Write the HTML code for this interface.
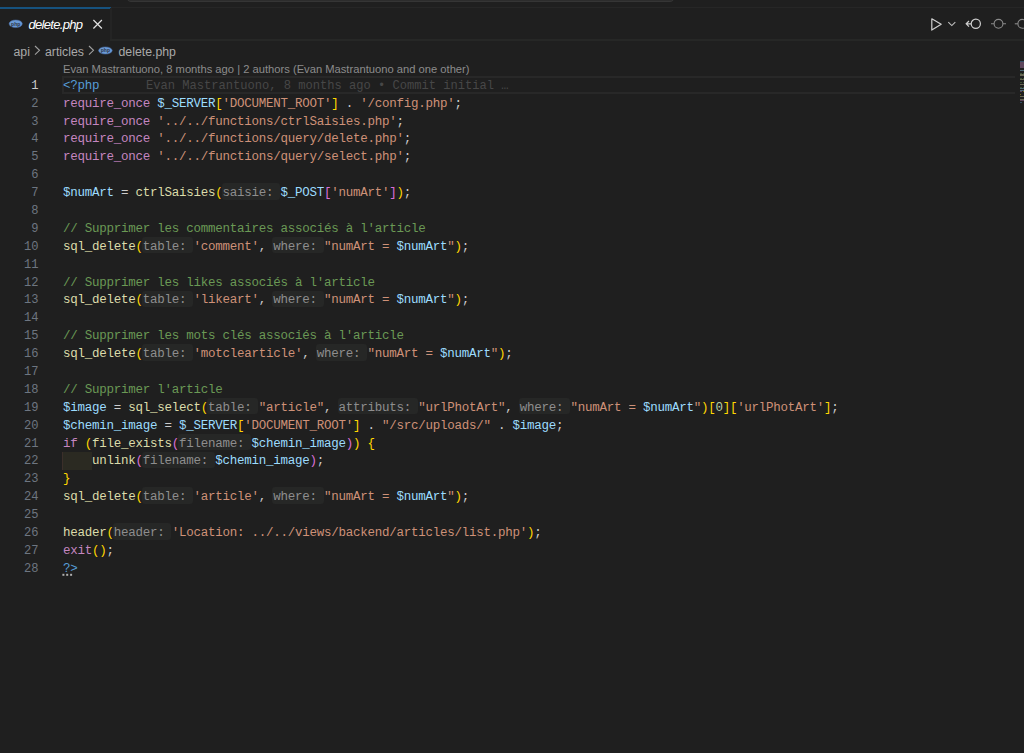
<!DOCTYPE html>
<html><head><meta charset="utf-8">
<style>
html,body{margin:0;padding:0;}
body{width:1024px;height:753px;overflow:hidden;background:#1f1f1f;position:relative;font-family:"Liberation Sans",sans-serif;}
.abs{position:absolute;}
.cmd{position:absolute;left:125.5px;top:-20px;width:549px;height:22.2px;background:#2c2c2c;border:1px solid #353535;border-radius:5px;box-sizing:border-box;}
.tabtop{position:absolute;left:111px;top:7px;width:913px;height:1px;background:#262626;}
.tabbot{position:absolute;left:110px;top:39px;width:914px;height:2px;background:#262726;}
.tab{position:absolute;left:0;top:7px;width:111px;height:33px;background:#1f1f1f;border-top:2px solid #16527f;box-sizing:border-box;}
.tabr{position:absolute;left:110px;top:8px;width:2px;height:32px;background:#242424;}
.tabtxt{position:absolute;left:28.5px;top:16.5px;font-style:italic;font-size:13px;letter-spacing:-0.68px;color:#ffffff;white-space:pre;line-height:16px;}
.bc{position:absolute;top:44px;font-size:12.3px;color:#a9a9a9;white-space:pre;line-height:16px;}
.lens{position:absolute;left:63px;top:62px;font-size:11.2px;color:#8c8c8c;white-space:pre;line-height:15px;}
.ln,.gn{position:absolute;height:17.89px;line-height:17.89px;padding-top:1px;font-family:"Liberation Mono",monospace;font-size:12.08px;white-space:pre;}
.ln{left:63px;font-size:12.5px;letter-spacing:-0.2535px;}
.gn{left:0;width:38.5px;text-align:right;color:#6e7681;}
.gn.cur{color:#cccccc;}
.curline{position:absolute;left:62px;top:76.4px;width:952.6px;height:18.1px;box-sizing:border-box;border:2px solid #282828;border-right:none;}
.hb{position:absolute;height:16.4px;background:#262726;border-radius:3px;}
.k{color:#c586c0}.v{color:#9cdcfe}.s{color:#ce9178}.f{color:#dcdcaa}.y{color:#ffd700}.p{color:#da70d6}
.c{color:#6a9955}.b{color:#569cd6}.h{color:#8e8e8e}.n{color:#b5cea8}.o{color:#cccccc}
.blame{position:absolute;left:146px;top:77.8px;height:17.89px;line-height:17.89px;font-family:"Liberation Mono",monospace;font-size:12.08px;white-space:pre;color:#474747;}
.indent{position:absolute;left:62.3px;top:452px;width:29.6px;height:18px;background:#2b2a22;border-left:1px solid #3b2f2a;box-sizing:border-box;}
</style></head><body>
<div class="cmd"></div>
<div class="tabtop"></div>
<div class="tab"></div>
<div class="tabr"></div>
<div class="tabbot"></div>
<svg class="abs" style="left:8px;top:19px" width="16" height="10" viewBox="0 0 16 10"><ellipse cx="7.7" cy="4.8" rx="6.6" ry="3.8" fill="#6a9ad6" stroke="#4a6ea8" stroke-width="0.5"/><text x="7.7" y="6.5" font-size="5" font-family="Liberation Sans" font-weight="bold" fill="#2a3344" text-anchor="middle">php</text></svg>
<div class="tabtxt">delete.php</div>
<svg class="abs" style="left:92px;top:19px" width="11" height="11" viewBox="0 0 11 11"><path d="M1.4 1L9.9 9.5M9.9 1L1.4 9.5" stroke="#e0e0e0" stroke-width="1.2"/></svg>

<svg class="abs" style="left:924px;top:12px" width="100" height="24" viewBox="0 0 100 24">
<path d="M7.8 6.8L17.2 12.3L7.8 18.1Z" fill="none" stroke="#d0d0d0" stroke-width="1.2" stroke-linejoin="round"/>
<path d="M24.3 10.2L27.8 13.6L31.3 10.2" fill="none" stroke="#c0c0c0" stroke-width="1.1"/>
<circle cx="51.8" cy="11.8" r="4.6" fill="none" stroke="#d0d0d0" stroke-width="1.2"/>
<path d="M47 11.8H42.5M45 9L42.2 11.8L45 14.6" fill="none" stroke="#d0d0d0" stroke-width="1.2"/>
<circle cx="74.5" cy="11.8" r="4.4" fill="none" stroke="#8a8a8a" stroke-width="1.1"/>
<path d="M67 11.8H70.1M78.9 11.8H82" fill="none" stroke="#8a8a8a" stroke-width="1.1"/>
<circle cx="98.3" cy="11.8" r="4.4" fill="none" stroke="#8a8a8a" stroke-width="1.1"/>
<path d="M90.8 11.8H93.9" fill="none" stroke="#8a8a8a" stroke-width="1.1"/>
</svg>

<div class="bc" style="left:13.5px">api</div>
<svg class="abs" style="left:33px;top:45px" width="9" height="11" viewBox="0 0 9 11"><path d="M2 1L6.5 5.3L2 9.6" fill="none" stroke="#a0a0a0" stroke-width="1.1"/></svg>
<div class="bc" style="left:45px">articles</div>
<svg class="abs" style="left:87px;top:45px" width="9" height="11" viewBox="0 0 9 11"><path d="M2 1L6.5 5.3L2 9.6" fill="none" stroke="#a0a0a0" stroke-width="1.1"/></svg>
<svg class="abs" style="left:97px;top:45px" width="16" height="10" viewBox="0 0 16 10"><ellipse cx="8.4" cy="5.5" rx="6.8" ry="3.6" fill="#6a9ad6" stroke="#4a6ea8" stroke-width="0.5"/><text x="8.4" y="7" font-size="5" font-family="Liberation Sans" font-weight="bold" fill="#2a3344" text-anchor="middle">php</text></svg>
<div class="bc" style="left:118.5px">delete.php</div>

<div class="lens">Evan Mastrantuono, 8 months ago | 2 authors (Evan Mastrantuono and one other)</div>

<div class="curline"></div>
<div class="indent"></div>
<div class="hb" style="top:183.34px;left:221.66px;width:58.48px"></div>
<div class="hb" style="top:237.01px;left:141.93px;width:51.24px"></div>
<div class="hb" style="top:237.01px;left:272.39px;width:51.24px"></div>
<div class="hb" style="top:290.68px;left:141.93px;width:51.24px"></div>
<div class="hb" style="top:290.68px;left:272.39px;width:51.24px"></div>
<div class="hb" style="top:344.35px;left:141.93px;width:51.24px"></div>
<div class="hb" style="top:344.35px;left:315.88px;width:51.24px"></div>
<div class="hb" style="top:398.02px;left:207.16px;width:51.24px"></div>
<div class="hb" style="top:398.02px;left:337.62px;width:80.23px"></div>
<div class="hb" style="top:398.02px;left:518.82px;width:51.24px"></div>
<div class="hb" style="top:433.80px;left:178.17px;width:72.98px"></div>
<div class="hb" style="top:451.69px;left:141.93px;width:72.98px"></div>
<div class="hb" style="top:487.47px;left:141.93px;width:51.24px"></div>
<div class="hb" style="top:487.47px;left:272.39px;width:51.24px"></div>
<div class="hb" style="top:523.25px;left:112.94px;width:58.48px"></div>
<div class="gn cur" style="top:76.80px">1</div>
<div class="gn" style="top:94.69px">2</div>
<div class="gn" style="top:112.58px">3</div>
<div class="gn" style="top:130.47px">4</div>
<div class="gn" style="top:148.36px">5</div>
<div class="gn" style="top:166.25px">6</div>
<div class="gn" style="top:184.14px">7</div>
<div class="gn" style="top:202.03px">8</div>
<div class="gn" style="top:219.92px">9</div>
<div class="gn" style="top:237.81px">10</div>
<div class="gn" style="top:255.70px">11</div>
<div class="gn" style="top:273.59px">12</div>
<div class="gn" style="top:291.48px">13</div>
<div class="gn" style="top:309.37px">14</div>
<div class="gn" style="top:327.26px">15</div>
<div class="gn" style="top:345.15px">16</div>
<div class="gn" style="top:363.04px">17</div>
<div class="gn" style="top:380.93px">18</div>
<div class="gn" style="top:398.82px">19</div>
<div class="gn" style="top:416.71px">20</div>
<div class="gn" style="top:434.60px">21</div>
<div class="gn" style="top:452.49px">22</div>
<div class="gn" style="top:470.38px">23</div>
<div class="gn" style="top:488.27px">24</div>
<div class="gn" style="top:506.16px">25</div>
<div class="gn" style="top:524.05px">26</div>
<div class="gn" style="top:541.94px">27</div>
<div class="gn" style="top:559.83px">28</div>
<div class="ln" style="top:76.80px"><span class="b">&lt;?php</span></div>
<div class="ln" style="top:94.69px"><span class="k">require_once</span><span class="o"> </span><span class="v">$_SERVER</span><span class="y">[</span><span class="s">'DOCUMENT_ROOT'</span><span class="y">]</span><span class="o"> . </span><span class="s">'/config.php'</span><span class="o">;</span></div>
<div class="ln" style="top:112.58px"><span class="k">require_once</span><span class="o"> </span><span class="s">'../../functions/ctrlSaisies.php'</span><span class="o">;</span></div>
<div class="ln" style="top:130.47px"><span class="k">require_once</span><span class="o"> </span><span class="s">'../../functions/query/delete.php'</span><span class="o">;</span></div>
<div class="ln" style="top:148.36px"><span class="k">require_once</span><span class="o"> </span><span class="s">'../../functions/query/select.php'</span><span class="o">;</span></div>
<div class="ln" style="top:166.25px"></div>
<div class="ln" style="top:184.14px"><span class="v">$numArt</span><span class="o"> = </span><span class="f">ctrlSaisies</span><span class="y">(</span><span class="h">saisie: </span><span class="v">$_POST</span><span class="p">[</span><span class="s">'numArt'</span><span class="p">]</span><span class="y">)</span><span class="o">;</span></div>
<div class="ln" style="top:202.03px"></div>
<div class="ln" style="top:219.92px"><span class="c">// Supprimer les commentaires associés à l'article</span></div>
<div class="ln" style="top:237.81px"><span class="f">sql_delete</span><span class="y">(</span><span class="h">table: </span><span class="s">'comment'</span><span class="o">, </span><span class="h">where: </span><span class="s">"numArt = </span><span class="v">$numArt</span><span class="s">"</span><span class="y">)</span><span class="o">;</span></div>
<div class="ln" style="top:255.70px"></div>
<div class="ln" style="top:273.59px"><span class="c">// Supprimer les likes associés à l'article</span></div>
<div class="ln" style="top:291.48px"><span class="f">sql_delete</span><span class="y">(</span><span class="h">table: </span><span class="s">'likeart'</span><span class="o">, </span><span class="h">where: </span><span class="s">"numArt = </span><span class="v">$numArt</span><span class="s">"</span><span class="y">)</span><span class="o">;</span></div>
<div class="ln" style="top:309.37px"></div>
<div class="ln" style="top:327.26px"><span class="c">// Supprimer les mots clés associés à l'article</span></div>
<div class="ln" style="top:345.15px"><span class="f">sql_delete</span><span class="y">(</span><span class="h">table: </span><span class="s">'motclearticle'</span><span class="o">, </span><span class="h">where: </span><span class="s">"numArt = </span><span class="v">$numArt</span><span class="s">"</span><span class="y">)</span><span class="o">;</span></div>
<div class="ln" style="top:363.04px"></div>
<div class="ln" style="top:380.93px"><span class="c">// Supprimer l'article</span></div>
<div class="ln" style="top:398.82px"><span class="v">$image</span><span class="o"> = </span><span class="f">sql_select</span><span class="y">(</span><span class="h">table: </span><span class="s">"article"</span><span class="o">, </span><span class="h">attributs: </span><span class="s">"urlPhotArt"</span><span class="o">, </span><span class="h">where: </span><span class="s">"numArt = </span><span class="v">$numArt</span><span class="s">"</span><span class="y">)</span><span class="y">[</span><span class="n">0</span><span class="y">]</span><span class="y">[</span><span class="s">'urlPhotArt'</span><span class="y">]</span><span class="o">;</span></div>
<div class="ln" style="top:416.71px"><span class="v">$chemin_image</span><span class="o"> = </span><span class="v">$_SERVER</span><span class="y">[</span><span class="s">'DOCUMENT_ROOT'</span><span class="y">]</span><span class="o"> . </span><span class="s">"/src/uploads/"</span><span class="o"> . </span><span class="v">$image</span><span class="o">;</span></div>
<div class="ln" style="top:434.60px"><span class="k">if</span><span class="o"> </span><span class="y">(</span><span class="f">file_exists</span><span class="p">(</span><span class="h">filename: </span><span class="v">$chemin_image</span><span class="p">)</span><span class="y">)</span><span class="o"> </span><span class="y">{</span></div>
<div class="ln" style="top:452.49px"><span class="o">    </span><span class="f">unlink</span><span class="p">(</span><span class="h">filename: </span><span class="v">$chemin_image</span><span class="p">)</span><span class="o">;</span></div>
<div class="ln" style="top:470.38px"><span class="y">}</span></div>
<div class="ln" style="top:488.27px"><span class="f">sql_delete</span><span class="y">(</span><span class="h">table: </span><span class="s">'article'</span><span class="o">, </span><span class="h">where: </span><span class="s">"numArt = </span><span class="v">$numArt</span><span class="s">"</span><span class="y">)</span><span class="o">;</span></div>
<div class="ln" style="top:506.16px"></div>
<div class="ln" style="top:524.05px"><span class="f">header</span><span class="y">(</span><span class="h">header: </span><span class="s">'Location: ../../views/backend/articles/list.php'</span><span class="y">)</span><span class="o">;</span></div>
<div class="ln" style="top:541.94px"><span class="k">exit</span><span class="y">()</span><span class="o">;</span></div>
<div class="ln" style="top:559.83px"><span class="b">?&gt;</span></div>
<div class="blame">Evan Mastrantuono, 8 months ago • Commit initial …</div>
<svg class="abs" style="left:60px;top:571px" width="16" height="8" viewBox="0 0 16 8"><rect x="2.4" y="2.8" width="2" height="2" fill="#b0b0b0"/><rect x="6.2" y="2.8" width="2" height="2" fill="#b0b0b0"/><rect x="10.1" y="2.8" width="2" height="2" fill="#b0b0b0"/></svg>

<div style="position:absolute;left:0;top:0;width:1024px;height:120px;filter:blur(0.3px)"><div style="position:absolute;left:1020.00px;top:60.90px;width:0.94px;height:1.3px;background:#569cd6;opacity:0.38"></div>
<div style="position:absolute;left:1020.94px;top:60.90px;width:0.94px;height:1.3px;background:#569cd6;opacity:0.38"></div>
<div style="position:absolute;left:1021.88px;top:60.90px;width:0.94px;height:1.3px;background:#569cd6;opacity:0.38"></div>
<div style="position:absolute;left:1022.82px;top:60.90px;width:0.94px;height:1.3px;background:#569cd6;opacity:0.38"></div>
<div style="position:absolute;left:1023.76px;top:60.90px;width:0.94px;height:1.3px;background:#569cd6;opacity:0.38"></div>
<div style="position:absolute;left:1020.00px;top:62.41px;width:0.94px;height:1.3px;background:#c586c0;opacity:0.38"></div>
<div style="position:absolute;left:1020.94px;top:62.41px;width:0.94px;height:1.3px;background:#c586c0;opacity:0.38"></div>
<div style="position:absolute;left:1021.88px;top:62.41px;width:0.94px;height:1.3px;background:#c586c0;opacity:0.38"></div>
<div style="position:absolute;left:1022.82px;top:62.41px;width:0.94px;height:1.3px;background:#c586c0;opacity:0.38"></div>
<div style="position:absolute;left:1023.76px;top:62.41px;width:0.94px;height:1.3px;background:#c586c0;opacity:0.38"></div>
<div style="position:absolute;left:1020.00px;top:63.92px;width:0.94px;height:1.3px;background:#c586c0;opacity:0.38"></div>
<div style="position:absolute;left:1020.94px;top:63.92px;width:0.94px;height:1.3px;background:#c586c0;opacity:0.38"></div>
<div style="position:absolute;left:1021.88px;top:63.92px;width:0.94px;height:1.3px;background:#c586c0;opacity:0.38"></div>
<div style="position:absolute;left:1022.82px;top:63.92px;width:0.94px;height:1.3px;background:#c586c0;opacity:0.38"></div>
<div style="position:absolute;left:1023.76px;top:63.92px;width:0.94px;height:1.3px;background:#c586c0;opacity:0.38"></div>
<div style="position:absolute;left:1020.00px;top:65.43px;width:0.94px;height:1.3px;background:#c586c0;opacity:0.38"></div>
<div style="position:absolute;left:1020.94px;top:65.43px;width:0.94px;height:1.3px;background:#c586c0;opacity:0.38"></div>
<div style="position:absolute;left:1021.88px;top:65.43px;width:0.94px;height:1.3px;background:#c586c0;opacity:0.38"></div>
<div style="position:absolute;left:1022.82px;top:65.43px;width:0.94px;height:1.3px;background:#c586c0;opacity:0.38"></div>
<div style="position:absolute;left:1023.76px;top:65.43px;width:0.94px;height:1.3px;background:#c586c0;opacity:0.38"></div>
<div style="position:absolute;left:1020.00px;top:66.94px;width:0.94px;height:1.3px;background:#c586c0;opacity:0.38"></div>
<div style="position:absolute;left:1020.94px;top:66.94px;width:0.94px;height:1.3px;background:#c586c0;opacity:0.38"></div>
<div style="position:absolute;left:1021.88px;top:66.94px;width:0.94px;height:1.3px;background:#c586c0;opacity:0.38"></div>
<div style="position:absolute;left:1022.82px;top:66.94px;width:0.94px;height:1.3px;background:#c586c0;opacity:0.38"></div>
<div style="position:absolute;left:1023.76px;top:66.94px;width:0.94px;height:1.3px;background:#c586c0;opacity:0.38"></div>
<div style="position:absolute;left:1020.00px;top:69.96px;width:0.94px;height:1.3px;background:#9cdcfe;opacity:0.38"></div>
<div style="position:absolute;left:1020.94px;top:69.96px;width:0.94px;height:1.3px;background:#9cdcfe;opacity:0.38"></div>
<div style="position:absolute;left:1021.88px;top:69.96px;width:0.94px;height:1.3px;background:#9cdcfe;opacity:0.38"></div>
<div style="position:absolute;left:1022.82px;top:69.96px;width:0.94px;height:1.3px;background:#9cdcfe;opacity:0.38"></div>
<div style="position:absolute;left:1023.76px;top:69.96px;width:0.94px;height:1.3px;background:#9cdcfe;opacity:0.38"></div>
<div style="position:absolute;left:1020.00px;top:72.98px;width:0.94px;height:1.3px;background:#6a9955;opacity:0.38"></div>
<div style="position:absolute;left:1020.94px;top:72.98px;width:0.94px;height:1.3px;background:#6a9955;opacity:0.38"></div>
<div style="position:absolute;left:1022.82px;top:72.98px;width:0.94px;height:1.3px;background:#6a9955;opacity:0.38"></div>
<div style="position:absolute;left:1023.76px;top:72.98px;width:0.94px;height:1.3px;background:#6a9955;opacity:0.38"></div>
<div style="position:absolute;left:1020.00px;top:74.49px;width:0.94px;height:1.3px;background:#dcdcaa;opacity:0.38"></div>
<div style="position:absolute;left:1020.94px;top:74.49px;width:0.94px;height:1.3px;background:#dcdcaa;opacity:0.38"></div>
<div style="position:absolute;left:1021.88px;top:74.49px;width:0.94px;height:1.3px;background:#dcdcaa;opacity:0.38"></div>
<div style="position:absolute;left:1022.82px;top:74.49px;width:0.94px;height:1.3px;background:#dcdcaa;opacity:0.38"></div>
<div style="position:absolute;left:1023.76px;top:74.49px;width:0.94px;height:1.3px;background:#dcdcaa;opacity:0.38"></div>
<div style="position:absolute;left:1020.00px;top:77.51px;width:0.94px;height:1.3px;background:#6a9955;opacity:0.38"></div>
<div style="position:absolute;left:1020.94px;top:77.51px;width:0.94px;height:1.3px;background:#6a9955;opacity:0.38"></div>
<div style="position:absolute;left:1022.82px;top:77.51px;width:0.94px;height:1.3px;background:#6a9955;opacity:0.38"></div>
<div style="position:absolute;left:1023.76px;top:77.51px;width:0.94px;height:1.3px;background:#6a9955;opacity:0.38"></div>
<div style="position:absolute;left:1020.00px;top:79.02px;width:0.94px;height:1.3px;background:#dcdcaa;opacity:0.38"></div>
<div style="position:absolute;left:1020.94px;top:79.02px;width:0.94px;height:1.3px;background:#dcdcaa;opacity:0.38"></div>
<div style="position:absolute;left:1021.88px;top:79.02px;width:0.94px;height:1.3px;background:#dcdcaa;opacity:0.38"></div>
<div style="position:absolute;left:1022.82px;top:79.02px;width:0.94px;height:1.3px;background:#dcdcaa;opacity:0.38"></div>
<div style="position:absolute;left:1023.76px;top:79.02px;width:0.94px;height:1.3px;background:#dcdcaa;opacity:0.38"></div>
<div style="position:absolute;left:1020.00px;top:82.04px;width:0.94px;height:1.3px;background:#6a9955;opacity:0.38"></div>
<div style="position:absolute;left:1020.94px;top:82.04px;width:0.94px;height:1.3px;background:#6a9955;opacity:0.38"></div>
<div style="position:absolute;left:1022.82px;top:82.04px;width:0.94px;height:1.3px;background:#6a9955;opacity:0.38"></div>
<div style="position:absolute;left:1023.76px;top:82.04px;width:0.94px;height:1.3px;background:#6a9955;opacity:0.38"></div>
<div style="position:absolute;left:1020.00px;top:83.55px;width:0.94px;height:1.3px;background:#dcdcaa;opacity:0.38"></div>
<div style="position:absolute;left:1020.94px;top:83.55px;width:0.94px;height:1.3px;background:#dcdcaa;opacity:0.38"></div>
<div style="position:absolute;left:1021.88px;top:83.55px;width:0.94px;height:1.3px;background:#dcdcaa;opacity:0.38"></div>
<div style="position:absolute;left:1022.82px;top:83.55px;width:0.94px;height:1.3px;background:#dcdcaa;opacity:0.38"></div>
<div style="position:absolute;left:1023.76px;top:83.55px;width:0.94px;height:1.3px;background:#dcdcaa;opacity:0.38"></div>
<div style="position:absolute;left:1020.00px;top:86.57px;width:0.94px;height:1.3px;background:#6a9955;opacity:0.38"></div>
<div style="position:absolute;left:1020.94px;top:86.57px;width:0.94px;height:1.3px;background:#6a9955;opacity:0.38"></div>
<div style="position:absolute;left:1022.82px;top:86.57px;width:0.94px;height:1.3px;background:#6a9955;opacity:0.38"></div>
<div style="position:absolute;left:1023.76px;top:86.57px;width:0.94px;height:1.3px;background:#6a9955;opacity:0.38"></div>
<div style="position:absolute;left:1020.00px;top:88.08px;width:0.94px;height:1.3px;background:#9cdcfe;opacity:0.38"></div>
<div style="position:absolute;left:1020.94px;top:88.08px;width:0.94px;height:1.3px;background:#9cdcfe;opacity:0.38"></div>
<div style="position:absolute;left:1021.88px;top:88.08px;width:0.94px;height:1.3px;background:#9cdcfe;opacity:0.38"></div>
<div style="position:absolute;left:1022.82px;top:88.08px;width:0.94px;height:1.3px;background:#9cdcfe;opacity:0.38"></div>
<div style="position:absolute;left:1023.76px;top:88.08px;width:0.94px;height:1.3px;background:#9cdcfe;opacity:0.38"></div>
<div style="position:absolute;left:1020.00px;top:89.59px;width:0.94px;height:1.3px;background:#9cdcfe;opacity:0.38"></div>
<div style="position:absolute;left:1020.94px;top:89.59px;width:0.94px;height:1.3px;background:#9cdcfe;opacity:0.38"></div>
<div style="position:absolute;left:1021.88px;top:89.59px;width:0.94px;height:1.3px;background:#9cdcfe;opacity:0.38"></div>
<div style="position:absolute;left:1022.82px;top:89.59px;width:0.94px;height:1.3px;background:#9cdcfe;opacity:0.38"></div>
<div style="position:absolute;left:1023.76px;top:89.59px;width:0.94px;height:1.3px;background:#9cdcfe;opacity:0.38"></div>
<div style="position:absolute;left:1020.00px;top:91.10px;width:0.94px;height:1.3px;background:#c586c0;opacity:0.38"></div>
<div style="position:absolute;left:1020.94px;top:91.10px;width:0.94px;height:1.3px;background:#c586c0;opacity:0.38"></div>
<div style="position:absolute;left:1022.82px;top:91.10px;width:0.94px;height:1.3px;background:#ffd700;opacity:0.38"></div>
<div style="position:absolute;left:1023.76px;top:91.10px;width:0.94px;height:1.3px;background:#dcdcaa;opacity:0.38"></div>
<div style="position:absolute;left:1023.76px;top:92.61px;width:0.94px;height:1.3px;background:#dcdcaa;opacity:0.38"></div>
<div style="position:absolute;left:1020.00px;top:94.12px;width:0.94px;height:1.3px;background:#ffd700;opacity:0.38"></div>
<div style="position:absolute;left:1020.00px;top:95.63px;width:0.94px;height:1.3px;background:#dcdcaa;opacity:0.38"></div>
<div style="position:absolute;left:1020.94px;top:95.63px;width:0.94px;height:1.3px;background:#dcdcaa;opacity:0.38"></div>
<div style="position:absolute;left:1021.88px;top:95.63px;width:0.94px;height:1.3px;background:#dcdcaa;opacity:0.38"></div>
<div style="position:absolute;left:1022.82px;top:95.63px;width:0.94px;height:1.3px;background:#dcdcaa;opacity:0.38"></div>
<div style="position:absolute;left:1023.76px;top:95.63px;width:0.94px;height:1.3px;background:#dcdcaa;opacity:0.38"></div>
<div style="position:absolute;left:1020.00px;top:98.65px;width:0.94px;height:1.3px;background:#dcdcaa;opacity:0.38"></div>
<div style="position:absolute;left:1020.94px;top:98.65px;width:0.94px;height:1.3px;background:#dcdcaa;opacity:0.38"></div>
<div style="position:absolute;left:1021.88px;top:98.65px;width:0.94px;height:1.3px;background:#dcdcaa;opacity:0.38"></div>
<div style="position:absolute;left:1022.82px;top:98.65px;width:0.94px;height:1.3px;background:#dcdcaa;opacity:0.38"></div>
<div style="position:absolute;left:1023.76px;top:98.65px;width:0.94px;height:1.3px;background:#dcdcaa;opacity:0.38"></div>
<div style="position:absolute;left:1020.00px;top:100.16px;width:0.94px;height:1.3px;background:#c586c0;opacity:0.38"></div>
<div style="position:absolute;left:1020.94px;top:100.16px;width:0.94px;height:1.3px;background:#c586c0;opacity:0.38"></div>
<div style="position:absolute;left:1021.88px;top:100.16px;width:0.94px;height:1.3px;background:#c586c0;opacity:0.38"></div>
<div style="position:absolute;left:1022.82px;top:100.16px;width:0.94px;height:1.3px;background:#c586c0;opacity:0.38"></div>
<div style="position:absolute;left:1023.76px;top:100.16px;width:0.94px;height:1.3px;background:#ffd700;opacity:0.38"></div>
<div style="position:absolute;left:1020.00px;top:101.67px;width:0.94px;height:1.3px;background:#569cd6;opacity:0.38"></div>
<div style="position:absolute;left:1020.94px;top:101.67px;width:0.94px;height:1.3px;background:#569cd6;opacity:0.38"></div></div>
</body></html>
